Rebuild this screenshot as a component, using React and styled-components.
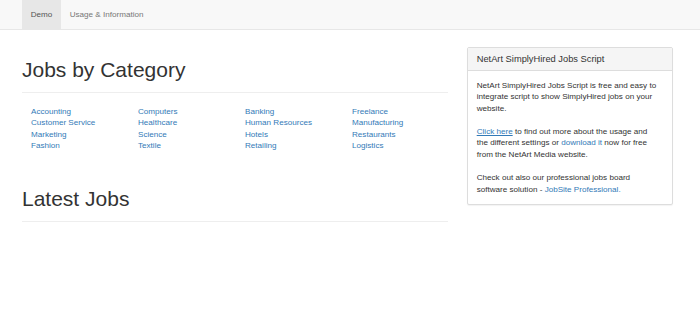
import React from 'react';
import styled, { createGlobalStyle } from 'styled-components';

const GlobalStyle = createGlobalStyle`
	body {
		margin: 0;
		background: #fff;
		color: #333;
		font-family: "Liberation Sans", Arial, sans-serif;
		font-size: 8.1px;
		line-height: 1.42857;
	}
`;

const Navbar = styled.nav`
	display: flex;
	height: 29px;
	padding-left: 22px;
	background: #f8f8f8;
	border-bottom: 1px solid #e7e7e7;
`;

const NavItem = styled.a`
	display: flex;
	align-items: center;
	padding: 0 8.7px;
	color: ${(p) => (p.$active ? '#555' : '#777')};
	background: ${(p) => (p.$active ? '#e7e7e7' : 'transparent')};
	text-decoration: none;
	cursor: pointer;
`;

const Container = styled.div`
	display: flex;
	align-items: flex-start;
	gap: 19px;
	padding-left: 22px;
`;

const MainColumn = styled.div`
	width: 426px;
`;

const SideColumn = styled.div`
	width: 206px;
	padding-top: 17px;
`;

const PageHeader = styled.div`
	margin-top: ${(p) => p.$top}px;
	padding-bottom: 5px;
	border-bottom: 1px solid #eee;
`;

const Title = styled.h1`
	margin: 0 0 6px;
	font-size: 21px;
	line-height: 1.1;
	font-weight: 500;
	color: #333;
`;

const CategoryGrid = styled.div`
	display: grid;
	grid-template-columns: repeat(4, 107px);
	margin-top: 12.5px;
	padding-left: 9px;
	line-height: 11.5px;
`;

const CategoryList = styled.div`
	display: flex;
	flex-direction: column;
`;

const Link = styled.a`
	color: #337ab7;
	text-decoration: ${(p) => (p.$underline ? 'underline' : 'none')};
	cursor: pointer;
`;

const Panel = styled.div`
	border: 1px solid #ddd;
	border-radius: 2px;
	background: #fff;
	box-shadow: 0 1px 1px rgba(0, 0, 0, 0.05);
`;

const PanelHeading = styled.div`
	padding: 5.8px 8.7px;
	background: #f5f5f5;
	border-bottom: 1px solid #ddd;
	border-radius: 2px 2px 0 0;
`;

const PanelTitle = styled.h3`
	margin: 0;
	font-size: 9.3px;
	line-height: 1.1;
	font-weight: 500;
	color: #333;
`;

const PanelBody = styled.div`
	padding: 8.7px;
	line-height: 11.6px;
`;

const Paragraph = styled.p`
	margin: 0 0 11.6px;
	white-space: nowrap;

	&:last-child {
		margin-bottom: 0;
	}
`;

const categories = [
	['Accounting', 'Customer Service', 'Marketing', 'Fashion'],
	['Computers', 'Healthcare', 'Science', 'Textile'],
	['Banking', 'Human Resources', 'Hotels', 'Retailing'],
	['Freelance', 'Manufacturing', 'Restaurants', 'Logistics'],
];

export default function App() {
	return (
		<>
			<GlobalStyle />
			<Navbar>
				<NavItem $active>Demo</NavItem>
				<NavItem>Usage &amp; Information</NavItem>
			</Navbar>
			<Container>
				<MainColumn>
					<PageHeader $top={28}>
						<Title>Jobs by Category</Title>
					</PageHeader>
					<CategoryGrid>
						{categories.map((column, i) => (
							<CategoryList key={i}>
								{column.map((name) => (
									<Link key={name}>{name}</Link>
								))}
							</CategoryList>
						))}
					</CategoryGrid>
					<PageHeader $top={35.5}>
						<Title>Latest Jobs</Title>
					</PageHeader>
				</MainColumn>
				<SideColumn>
					<Panel>
						<PanelHeading>
							<PanelTitle>NetArt SimplyHired Jobs Script</PanelTitle>
						</PanelHeading>
						<PanelBody>
							<Paragraph>
								NetArt SimplyHired Jobs Script is free and easy to
								<br />
								integrate script to show SimplyHired jobs on your
								<br />
								website.
							</Paragraph>
							<Paragraph>
								<Link $underline>Click here</Link> to find out more about the usage and
								<br />
								the different settings or <Link>download it</Link> now for free
								<br />
								from the NetArt Media website.
							</Paragraph>
							<Paragraph>
								Check out also our professional jobs board
								<br />
								software solution - <Link>JobSite Professional.</Link>
							</Paragraph>
						</PanelBody>
					</Panel>
				</SideColumn>
			</Container>
		</>
	);
}
